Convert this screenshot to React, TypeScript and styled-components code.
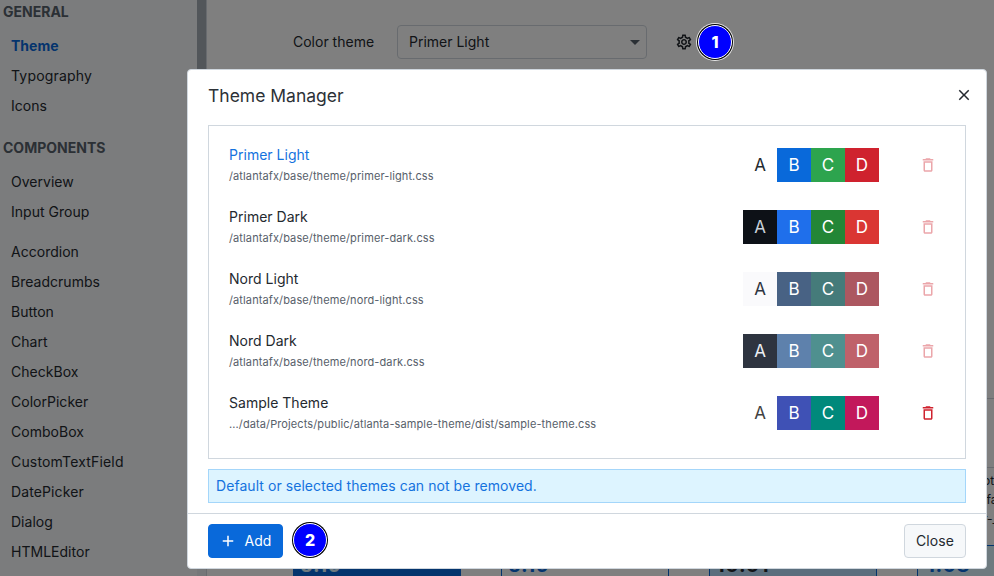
import React from "react";
import styled, { createGlobalStyle } from "styled-components";
import { MdAdd, MdClose, MdOutlineDelete, MdOutlineSettings } from "react-icons/md";

const GlobalStyle = createGlobalStyle`
  * { box-sizing: border-box; }
  body { margin: 0; overflow: hidden; background: #fff; }
`;

const Window = styled.div`
  position: relative;
  display: flex;
  width: 994px;
  height: 576px;
  overflow: hidden;
  font-family: Inter, sans-serif;
  font-size: 14px;
  color: #24292f;
  background: #fff;
`;

const Sidebar = styled.nav`
  display: flex;
  width: 207px;
  flex: none;
  background: #f6f8fa;
  border-right: 1px solid #d0d7de;
`;

const NavList = styled.div`
  flex: 1;
`;

const NavHeading = styled.div`
  height: 35px;
  padding-left: 3px;
  line-height: 32px;
  margin-top: -4px;
  font-weight: 700;
  color: #57606a;
`;

const NavItem = styled.div<{ $active?: boolean; $spread?: number; $gap?: boolean }>`
  height: 30px;
  line-height: 30px;
  padding-left: 11px;
  margin-top: ${(p) => (p.$gap ? 10 : 0)}px;
  font-weight: ${(p) => (p.$active ? 700 : 400)};
  color: ${(p) => (p.$active ? "#0969da" : "inherit")};
  letter-spacing: ${(p) => p.$spread ?? 0.02}px;
`;

const NavGap = styled.div`
  height: 15px;
`;

const ScrollTrack = styled.div`
  width: 9px;
  background: #eaeef2;
`;

const ScrollThumb = styled.div`
  height: 400px;
  background: #a5adb4;
`;

const Content = styled.main`
  flex: 1;
  display: flex;
  flex-direction: column;
  min-width: 0;
`;

const ThemeRow = styled.div`
  display: flex;
  align-items: center;
  height: 34px;
  margin: 25px 0 0 86px;
`;

const FieldLabel = styled.span`
  width: 104px;
  padding-bottom: 2px;
`;

const Combo = styled.div`
  display: flex;
  align-items: center;
  justify-content: space-between;
  width: 250px;
  height: 34px;
  padding: 0 6px 0 11px;
  margin-right: 28px;
  border: 1px solid #d0d7de;
  border-radius: 4px;
`;

const ComboValue = styled.span`
  padding-bottom: 2px;
`;

const ComboArrow = styled.span`
  border: 5px solid transparent;
  border-top-color: #57606a;
  border-bottom: 0;
`;

const SwatchArea = styled.div`
  margin: 339px 0 0 86px;
  display: flex;
  flex-direction: column;
`;

const Description = styled.div`
  height: 147px;
  width: 701px;
  border-top: 1px solid #d0d7de;
`;

const DescriptionBody = styled.div`
  width: 100%;
  height: 79px;
  margin-top: 68px;
  border-top: 1px solid #d0d7de;
  padding: 3px 0 0 690px;
  font-size: 12px;
  line-height: 19px;
  white-space: nowrap;
`;

const Cards = styled.div`
  display: flex;
  gap: 40px;
`;

const Card = styled.div<{ $bg: string; $fg: string }>`
  flex: none;
  width: 168px;
  height: 80px;
  padding: 10px 6px;
  border: 1px solid #0969da;
  background: ${(p) => p.$bg};
  color: ${(p) => p.$fg};
  font-size: 20px;
  line-height: 19px;
  font-weight: 700;
  letter-spacing: 0.7px;
`;

const Scrim = styled.div`
  position: absolute;
  inset: 0;
  background: rgba(0, 0, 0, 0.5);
`;

const Dialog = styled.section`
  position: absolute;
  left: 187px;
  top: 69px;
  width: 800px;
  height: 500px;
  display: flex;
  flex-direction: column;
  background: #fff;
  border: 1px solid #d0d7de;
  border-radius: 4px;
`;

const DialogHeader = styled.header`
  display: flex;
  align-items: flex-start;
  justify-content: space-between;
  height: 55px;
  padding: 16px 13px 0 20px;
  flex: none;
`;

const DialogTitle = styled.h1`
  margin: 0;
  font-size: 17.5px;
  line-height: 20px;
  font-weight: 400;
  color: #2c3137;
`;

const IconButton = styled.button<{ $color?: string; $faded?: boolean }>`
  display: flex;
  padding: 0;
  border: 0;
  background: none;
  font-size: 18px;
  color: ${(p) => p.$color ?? "#24292f"};
  opacity: ${(p) => (p.$faded ? 0.4 : 1)};
`;

const ThemeList = styled.div`
  height: 334px;
  margin: 0 20px;
  padding: 8px 28px 0 20px;
  border: 1px solid #d0d7de;
  flex: none;
`;

const ThemeItem = styled.div`
  display: flex;
  align-items: center;
  height: 62px;
`;

const ThemeText = styled.div`
  flex: 1;
`;

const ThemeName = styled.div<{ $selected?: boolean }>`
  height: 21px;
  line-height: 19px;
  letter-spacing: 0.02px;
  color: ${(p) => (p.$selected ? "#1472de" : "inherit")};
`;

const ThemePath = styled.div`
  height: 20px;
  line-height: 20px;
  font-size: 11px;
  letter-spacing: 0.11px;
  color: #57606a;
`;

const Swatches = styled.div`
  display: flex;
  margin-right: 40px;
`;

const Swatch = styled.span<{ $bg: string; $fg: string }>`
  width: 34px;
  height: 34px;
  line-height: 34px;
  text-align: center;
  font-size: 17px;
  background: ${(p) => p.$bg};
  color: ${(p) => p.$fg};
`;

const Notice = styled.div`
  height: 34px;
  line-height: 32px;
  margin: 10px 20px;
  padding-left: 7px;
  border: 1px solid #a4d6fa;
  background: #ddf4ff;
  color: #1472de;
  letter-spacing: 0.06px;
  flex: none;
`;

const DialogFooter = styled.footer`
  display: flex;
  justify-content: space-between;
  align-items: center;
  flex: 1;
  padding: 0 20px;
  border-top: 1px solid #d0d7de;
`;

const Button = styled.button<{ $accent?: boolean }>`
  display: flex;
  align-items: center;
  justify-content: center;
  gap: 7px;
  width: ${(p) => (p.$accent ? 75 : 62)}px;
  height: 34px;
  padding: 0;
  font: 14px Inter, sans-serif;
  letter-spacing: 0.1px;
  border: 1px solid ${(p) => (p.$accent ? "#0969da" : "#d0d7de")};
  border-radius: 4px;
  background: ${(p) => (p.$accent ? "#0969da" : "#f6f8fa")};
  color: ${(p) => (p.$accent ? "#fff" : "#24292f")};
`;

const ButtonLabel = styled.span`
  padding-bottom: 2px;
`;

const Marker = styled.div<{ $x: number; $y: number }>`
  position: absolute;
  left: ${(p) => p.$x - 17}px;
  top: ${(p) => p.$y - 17}px;
  width: 34px;
  height: 34px;
  border: 1px solid #fff;
  border-radius: 50%;
  background: #00f;
  box-shadow: 0 0 0 1px #000, 0 0 0 2px rgba(255, 255, 255, 0.8);
  color: #fff;
  text-align: center;
  font-size: 16px;
  line-height: 32px;
  font-weight: 800;
`;

const components: { name: string; gap?: boolean; spread?: number }[] = [
  { name: "Overview" },
  { name: "Input Group" },
  { name: "Accordion", gap: true },
  { name: "Breadcrumbs" },
  { name: "Button" },
  { name: "Chart" },
  { name: "CheckBox" },
  { name: "ColorPicker" },
  { name: "ComboBox" },
  { name: "CustomTextField", spread: 0.17 },
  { name: "DatePicker", spread: 0.12 },
  { name: "Dialog" },
  { name: "HTMLEditor" },
];

const themes = [
  { name: "Primer Light", path: "/atlantafx/base/theme/primer-light.css", colors: ["#ffffff", "#0969da", "#2da44e", "#cf222e"], text: "#24292f" },
  { name: "Primer Dark", path: "/atlantafx/base/theme/primer-dark.css", colors: ["#0d1117", "#1f6feb", "#238636", "#da3633"], text: "#c9d1d9" },
  { name: "Nord Light", path: "/atlantafx/base/theme/nord-light.css", colors: ["#fafafc", "#486284", "#457b7a", "#ac5760"], text: "#2e3440" },
  { name: "Nord Dark", path: "/atlantafx/base/theme/nord-dark.css", colors: ["#2e3440", "#5e81ac", "#4f908f", "#bf616a"], text: "#eceff4" },
  { name: "Sample Theme", path: ".../data/Projects/public/atlanta-sample-theme/dist/sample-theme.css", colors: ["#ffffff", "#3f51b5", "#00897b", "#c2185b"], text: "#424242", removable: true },
];

export default function App() {
  return (
    <Window>
      <GlobalStyle />
      <Sidebar>
        <NavList>
          <NavHeading>GENERAL</NavHeading>
          <div>
            <NavItem $active>Theme</NavItem>
            <NavItem $spread={0.18}>Typography</NavItem>
            <NavItem>Icons</NavItem>
          </div>
          <NavGap />
          <NavHeading>COMPONENTS</NavHeading>
          {components.map((c) => (
            <NavItem key={c.name} $gap={c.gap} $spread={c.spread}>{c.name}</NavItem>
          ))}
        </NavList>
        <ScrollTrack><ScrollThumb /></ScrollTrack>
      </Sidebar>
      <Content>
        <ThemeRow>
          <FieldLabel>Color theme</FieldLabel>
          <Combo><ComboValue>Primer Light</ComboValue><ComboArrow /></Combo>
          <IconButton aria-label="Theme settings"><MdOutlineSettings /></IconButton>
        </ThemeRow>
        <SwatchArea>
          <Description>
            <DescriptionBody>
              <div>other</div>
              <div>&nbsp;fa</div>
              <div>r-_</div>
            </DescriptionBody>
          </Description>
          <Cards>
            <Card $bg="#0969da" $fg="#ddf4ff">5.19</Card>
            <Card $bg="#ffffff" $fg="#0969da">5.19</Card>
            <Card $bg="#b6dcfa" $fg="#24292f">10.01</Card>
            <Card $bg="#ddf4ff" $fg="#0969da">&#8202;1.08</Card>
          </Cards>
        </SwatchArea>
      </Content>
      <Scrim />
      <Dialog role="dialog">
        <DialogHeader>
          <DialogTitle>Theme Manager</DialogTitle>
          <IconButton aria-label="Close dialog"><MdClose /></IconButton>
        </DialogHeader>
        <ThemeList>
          {themes.map((t, i) => (
            <ThemeItem key={t.name}>
              <ThemeText>
                <ThemeName $selected={i === 0}>{t.name}</ThemeName>
                <ThemePath>{t.path}</ThemePath>
              </ThemeText>
              <Swatches>
                {t.colors.map((c, n) => (
                  <Swatch key={c} $bg={c} $fg={n === 0 ? t.text : "#fff"}>{"ABCD"[n]}</Swatch>
                ))}
              </Swatches>
              <IconButton aria-label="Remove" $color="#cf222e" $faded={!t.removable}><MdOutlineDelete /></IconButton>
            </ThemeItem>
          ))}
        </ThemeList>
        <Notice>Default or selected themes can not be removed.</Notice>
        <DialogFooter>
          <Button $accent><MdAdd size={18} /><ButtonLabel>Add</ButtonLabel></Button>
          <Button><ButtonLabel>Close</ButtonLabel></Button>
        </DialogFooter>
      </Dialog>
      <Marker $x={715} $y={42}>1</Marker>
      <Marker $x={310} $y={540}>2</Marker>
    </Window>
  );
}
